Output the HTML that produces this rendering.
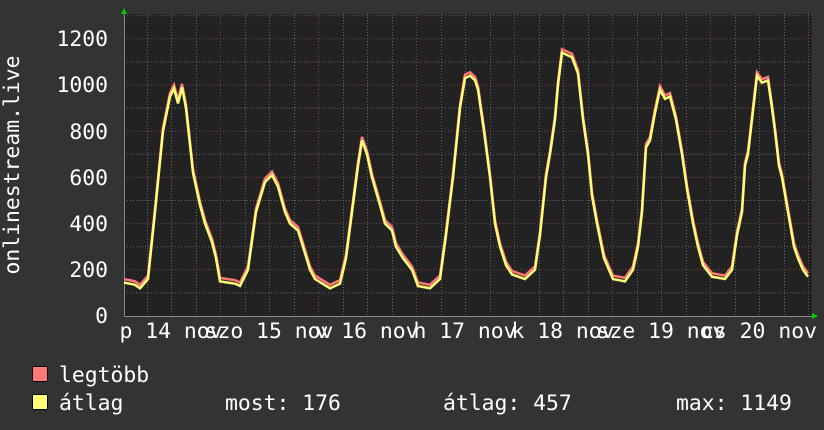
<!DOCTYPE html>
<html><head><meta charset="utf-8"><style>
html,body{margin:0;padding:0;background:#333;}
svg{display:block}
text{font-family:"DejaVu Sans Mono","Liberation Mono",monospace;fill:#fff;font-size:21.4px}
</style></head><body>
<svg width="824" height="430" viewBox="0 0 824 430" xmlns="http://www.w3.org/2000/svg">
<rect width="824" height="430" fill="#333"/>
<rect x="124" y="14" width="688" height="302" fill="#222"/>
<g stroke="#666" stroke-width="1" stroke-dasharray="1,2">
<line x1="124" x2="812" y1="292.9" y2="292.9"/><line x1="124" x2="812" y1="246.7" y2="246.7"/><line x1="124" x2="812" y1="200.5" y2="200.5"/><line x1="124" x2="812" y1="154.3" y2="154.3"/><line x1="124" x2="812" y1="108.1" y2="108.1"/><line x1="124" x2="812" y1="61.9" y2="61.9"/><line x1="124" x2="812" y1="15.7" y2="15.7"/>
<line y1="14" y2="316" x1="147.5" x2="147.5"/><line y1="14" y2="316" x1="171.5" x2="171.5"/><line y1="14" y2="316" x1="196.5" x2="196.5"/>
<line y1="14" y2="316" x1="245.5" x2="245.5"/><line y1="14" y2="316" x1="269.5" x2="269.5"/><line y1="14" y2="316" x1="294.5" x2="294.5"/>
<line y1="14" y2="316" x1="343.5" x2="343.5"/><line y1="14" y2="316" x1="367.5" x2="367.5"/><line y1="14" y2="316" x1="392.5" x2="392.5"/>
<line y1="14" y2="316" x1="441.5" x2="441.5"/><line y1="14" y2="316" x1="465.5" x2="465.5"/><line y1="14" y2="316" x1="490.5" x2="490.5"/>
<line y1="14" y2="316" x1="539.5" x2="539.5"/><line y1="14" y2="316" x1="563.5" x2="563.5"/><line y1="14" y2="316" x1="588.5" x2="588.5"/>
<line y1="14" y2="316" x1="637.5" x2="637.5"/><line y1="14" y2="316" x1="661.5" x2="661.5"/><line y1="14" y2="316" x1="686.5" x2="686.5"/>
<line y1="14" y2="316" x1="735.5" x2="735.5"/><line y1="14" y2="316" x1="759.5" x2="759.5"/><line y1="14" y2="316" x1="784.5" x2="784.5"/>
</g>
<g stroke="#7a4545" stroke-width="1" stroke-dasharray="1,2">
<line x1="124" x2="812" y1="269.8" y2="269.8"/><line x1="124" x2="812" y1="223.6" y2="223.6"/><line x1="124" x2="812" y1="177.4" y2="177.4"/><line x1="124" x2="812" y1="131.2" y2="131.2"/><line x1="124" x2="812" y1="85" y2="85"/><line x1="124" x2="812" y1="38.8" y2="38.8"/>
<line y1="14" y2="316" x1="220.5" x2="220.5"/><line y1="14" y2="316" x1="318.5" x2="318.5"/><line y1="14" y2="316" x1="416.5" x2="416.5"/><line y1="14" y2="316" x1="514.5" x2="514.5"/><line y1="14" y2="316" x1="612.5" x2="612.5"/><line y1="14" y2="316" x1="710.5" x2="710.5"/><line y1="14" y2="316" x1="808.5" x2="808.5"/>
</g>
<line x1="124" y1="316.5" x2="815" y2="316.5" stroke="#888"/>
<line x1="124.5" y1="10" x2="124.5" y2="316" stroke="#888"/>
<polygon points="121,14 127,14 124,8" fill="#0c0"/>
<polygon points="812,313 812,319 818,316" fill="#0c0"/>
<g transform="translate(0,316) scale(1,-0.231)">
<polyline fill="none" stroke="#ff7777" stroke-width="2.5" vector-effect="non-scaling-stroke" transform="translate(0,15)" points="124,145 135,135 140,120 148,160 155,450 163,800 170,950 174,985 178,920 182,990 186,900 193,620 200,480 205,400 212,320 216,250 220,150 235,140 240,130 248,200 256,450 265,580 272,610 278,560 285,450 290,400 298,370 303,300 310,200 315,160 330,120 340,140 346,250 352,450 358,650 362,760 367,700 372,600 380,480 385,400 392,370 396,300 403,250 412,200 418,130 430,120 440,160 446,350 453,600 460,900 465,1030 470,1040 475,1020 478,980 484,800 490,600 495,400 500,300 506,220 512,180 525,160 535,200 540,350 546,600 550,700 555,850 558,1000 562,1140 567,1130 572,1120 578,1050 583,850 588,700 592,520 597,400 604,250 613,160 625,150 633,200 638,300 642,450 646,730 650,760 655,880 660,980 665,940 670,950 676,850 682,700 687,550 693,400 698,300 703,220 712,170 725,160 732,200 737,350 742,450 745,650 748,700 752,850 757,1040 762,1010 768,1020 772,900 775,800 779,650 782,600 786,500 790,400 794,300 798,250 803,200 808,170"/>
<polyline fill="none" stroke="#ffff77" stroke-width="2.5" vector-effect="non-scaling-stroke" points="124,145 135,135 140,120 148,160 155,450 163,800 170,950 174,985 178,920 182,990 186,900 193,620 200,480 205,400 212,320 216,250 220,150 235,140 240,130 248,200 256,450 265,580 272,610 278,560 285,450 290,400 298,370 303,300 310,200 315,160 330,120 340,140 346,250 352,450 358,650 362,760 367,700 372,600 380,480 385,400 392,370 396,300 403,250 412,200 418,130 430,120 440,160 446,350 453,600 460,900 465,1030 470,1040 475,1020 478,980 484,800 490,600 495,400 500,300 506,220 512,180 525,160 535,200 540,350 546,600 550,700 555,850 558,1000 562,1140 567,1130 572,1120 578,1050 583,850 588,700 592,520 597,400 604,250 613,160 625,150 633,200 638,300 642,450 646,730 650,760 655,880 660,980 665,940 670,950 676,850 682,700 687,550 693,400 698,300 703,220 712,170 725,160 732,200 737,350 742,450 745,650 748,700 752,850 757,1040 762,1010 768,1020 772,900 775,800 779,650 782,600 786,500 790,400 794,300 798,250 803,200 808,170"/>
</g>
<g text-anchor="end">
<text x="108" y="323">0</text><text x="108" y="277">200</text><text x="108" y="231">400</text><text x="108" y="185">600</text><text x="108" y="139">800</text><text x="108" y="92">1000</text><text x="108" y="46">1200</text>
</g>
<text transform="translate(19,165) rotate(-90)" text-anchor="middle">onlinestream.live</text>
<g text-anchor="middle">
<text x="171" y="338">p 14 nov</text><text x="269" y="338">szo 15 nov</text><text x="367" y="338">v 16 nov</text><text x="465" y="338">h 17 nov</text><text x="563" y="338">k 18 nov</text><text x="661" y="338">sze 19 nov</text><text x="759" y="338">cs 20 nov</text>
</g>
<rect x="32.5" y="366.5" width="15" height="15" fill="#ff7777" stroke="#000"/>
<rect x="32.5" y="394.5" width="15" height="15" fill="#ffff77" stroke="#000"/>
<text x="59" y="382">legtöbb</text>
<text x="59" y="410">átlag</text>
<text x="225" y="410">most: 176</text>
<text x="443" y="410">átlag: 457</text>
<text x="676" y="410">max: 1149</text>
</svg>
</body></html>
